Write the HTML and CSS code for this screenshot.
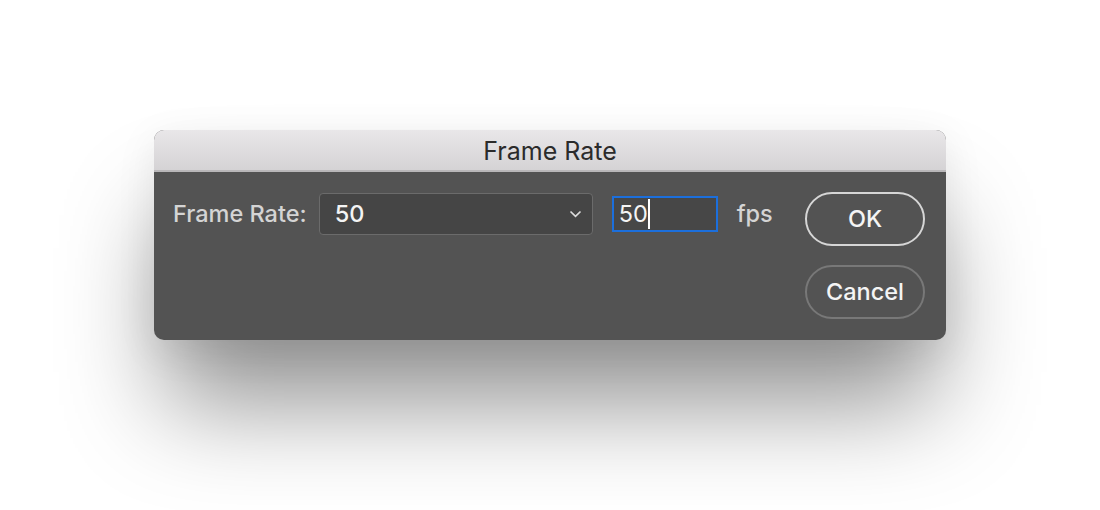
FILE: index.html
```html
<!DOCTYPE html>
<html>
<head>
<meta charset="utf-8">
<link rel="stylesheet" href="styles.css">
</head>
<body>
<div class="stage">
  <div class="dialog">
    <div class="titlebar">Frame Rate</div>
    <div class="body">
      <div class="row">
        <span class="label">Frame Rate:</span>
        <div class="select">
          <span class="select-value">50</span>
          <svg class="chev" width="13" height="8" viewBox="0 0 13 8"><path d="M1.5 1.5 L6.5 6.3 L11.5 1.5" fill="none" stroke="#dcdcdc" stroke-width="1.7"/></svg>
        </div>
        <div class="input"><span class="input-text">50</span><span class="caret"></span></div>
        <span class="unit">fps</span>
      </div>
      <div class="buttons">
        <div class="btn btn-ok">OK</div>
        <div class="btn btn-cancel">Cancel</div>
      </div>
    </div>
  </div>
</div>
</body>
</html>
```
FILE: styles.css
```css
html, body {
  margin: 0;
  padding: 0;
  background: #ffffff;
  width: 1100px;
  height: 510px;
  overflow: hidden;
  font-family: Inter, "Open Sans", "Liberation Sans", sans-serif;
}
.stage {
  padding-top: 130px;
  padding-left: 154px;
}
.dialog {
  width: 792px;
  height: 210px;
  border-radius: 10px;
  overflow: hidden;
  background: #535353;
  box-shadow: 0 75px 100px -10px rgba(0, 0, 0, 0.42), 0 10px 40px rgba(0, 0, 0, 0.08);
  display: flex;
  flex-direction: column;
}
.titlebar {
  flex: none;
  height: 42px;
  box-sizing: border-box;
  background: linear-gradient(#e9e7e9, #d5d3d5);
  border-bottom: 2px solid #b9b7b9;
  display: flex;
  align-items: center;
  justify-content: center;
  color: #2b2b2b;
  font-size: 25px;
  padding-top: 1px;
}
.body {
  flex: 1;
  display: flex;
  justify-content: space-between;
  padding: 20px 21px 0 19px;
}
.row {
  display: flex;
  align-items: center;
  height: 43px;
}
.label {
  color: #d4d4d4;
  font-size: 23.5px;
  font-weight: 500;
  margin-right: 12px;
}
.select {
  width: 274px;
  height: 42px;
  box-sizing: border-box;
  border: 1.5px solid #6b6b6b;
  border-radius: 4px;
  background: #454545;
  display: flex;
  align-items: center;
  justify-content: space-between;
  padding: 0 10px 0 15px;
}
.select-value {
  color: #f4f4f4;
  font-size: 23.5px;
  font-weight: 500;
}
.chev { display: block; }
.input {
  margin-left: 19px;
  width: 106px;
  height: 36px;
  box-sizing: border-box;
  border: 2px solid #1c6fdc;
  background: #474747;
  display: flex;
  align-items: center;
  padding-left: 5px;
}
.input-text {
  color: #f4f4f4;
  font-size: 23.5px;
}
.caret {
  width: 2px;
  height: 30px;
  background: #ffffff;
}
.unit {
  color: #d4d4d4;
  font-size: 23.5px;
  font-weight: 500;
  margin-left: 19px;
}
.buttons {
  display: flex;
  flex-direction: column;
  gap: 19px;
}
.btn {
  width: 120px;
  height: 54px;
  box-sizing: border-box;
  border-radius: 27px;
  display: flex;
  align-items: center;
  justify-content: center;
  color: #f4f4f4;
  font-size: 23.5px;
  font-weight: 500;
  padding-bottom: 2px;
}
.btn-ok {
  border: 2px solid #d6d6d6;
}
.btn-cancel {
  border: 2px solid #787878;
}
```
